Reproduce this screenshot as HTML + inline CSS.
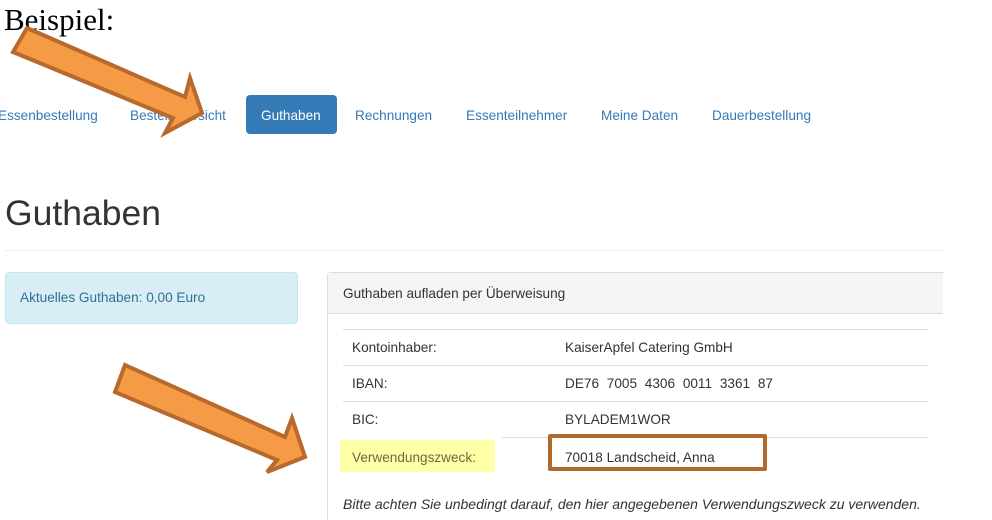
<!DOCTYPE html>
<html style="overflow:hidden;height:520px"><head><meta charset="utf-8"><style>
body{margin:0;width:992px;height:520px;background:#fff;position:relative;overflow:hidden;font-family:"Liberation Sans",Arial,sans-serif;color:#333}
.a{position:absolute;white-space:nowrap}
.nav{font-size:13.6px;color:#337ab7;top:108px}
.t{font-size:13.6px}
</style></head><body>
<div class="a" style="left:4px;top:2px;font-family:'Liberation Serif',serif;font-size:31px;color:#000">Beispiel:</div>
<div class="a nav" style="left:-2px">Essenbestellung</div>
<div class="a nav" style="left:130px">Bestellübersicht</div>
<div class="a" style="left:246px;top:95px;width:91px;height:39px;background:#337ab7;border-radius:4px"></div>
<div class="a nav" style="left:261px;color:#fff">Guthaben</div>
<div class="a nav" style="left:355px">Rechnungen</div>
<div class="a nav" style="left:466px">Essenteilnehmer</div>
<div class="a nav" style="left:601px">Meine Daten</div>
<div class="a nav" style="left:712px">Dauerbestellung</div>
<div class="a" style="left:5px;top:193px;font-size:35.5px;color:#333">Guthaben</div>
<div class="a" style="left:5px;top:250px;width:938px;height:1px;background:#eee"></div>
<div class="a" style="left:5px;top:272px;width:291px;height:50px;background:#d9edf7;border:1px solid #bce8f1;border-radius:4px"></div>
<div class="a t" style="left:20px;top:290px;color:#31708f">Aktuelles Guthaben: 0,00 Euro</div>
<div class="a" style="left:327px;top:272px;width:616px;height:248px;border-left:1px solid #ddd;border-top:1px solid #ddd;border-radius:4px 0 0 0"></div>
<div class="a" style="left:328px;top:273px;width:615px;height:40px;background:#f5f5f5;border-bottom:1px solid #ddd"></div>
<div class="a t" style="left:343px;top:286px">Guthaben aufladen per Überweisung</div>
<div class="a" style="left:343px;top:329px;width:585px;height:1px;background:#ddd"></div>
<div class="a" style="left:343px;top:365px;width:585px;height:1px;background:#ddd"></div>
<div class="a" style="left:343px;top:401px;width:585px;height:1px;background:#ddd"></div>
<div class="a" style="left:502px;top:437px;width:426px;height:1px;background:#ddd"></div>
<div class="a" style="left:340px;top:440px;width:155px;height:32px;background:#ffffa8"></div>
<div class="a t" style="left:352px;top:340px">Kontoinhaber:</div>
<div class="a t" style="left:565px;top:340px">KaiserApfel Catering GmbH</div>
<div class="a t" style="left:352px;top:376px">IBAN:</div>
<div class="a t" style="left:565px;top:376px;word-spacing:4px">DE76 7005 4306 0011 3361 87</div>
<div class="a t" style="left:352px;top:412px">BIC:</div>
<div class="a t" style="left:565px;top:412px">BYLADEM1WOR</div>
<div class="a t" style="left:352px;top:450px;color:#6b6b3a">Verwendungszweck:</div>
<div class="a" style="left:548px;top:434px;width:211px;height:29px;border:4px solid #b06a2c;border-radius:2px"></div>
<div class="a t" style="left:565px;top:450px">70018 Landscheid, Anna</div>
<div class="a" style="left:343px;top:496px;font-size:14px;font-style:italic">Bitte achten Sie unbedingt darauf, den hier angegebenen Verwendungszweck zu verwenden.</div>
<svg class="a" style="left:0;top:0" width="992" height="520">
<polygon points="27,28 185,97 190,78 202,113 165,133 173,118 13,52" fill="#f59b45" stroke="#b8692c" stroke-width="4"/>
<polygon points="125,365 285,437 292,418 305,457 267,472 277,460 115,392" fill="#f59b45" stroke="#b8692c" stroke-width="4"/>
</svg>
</body></html>
